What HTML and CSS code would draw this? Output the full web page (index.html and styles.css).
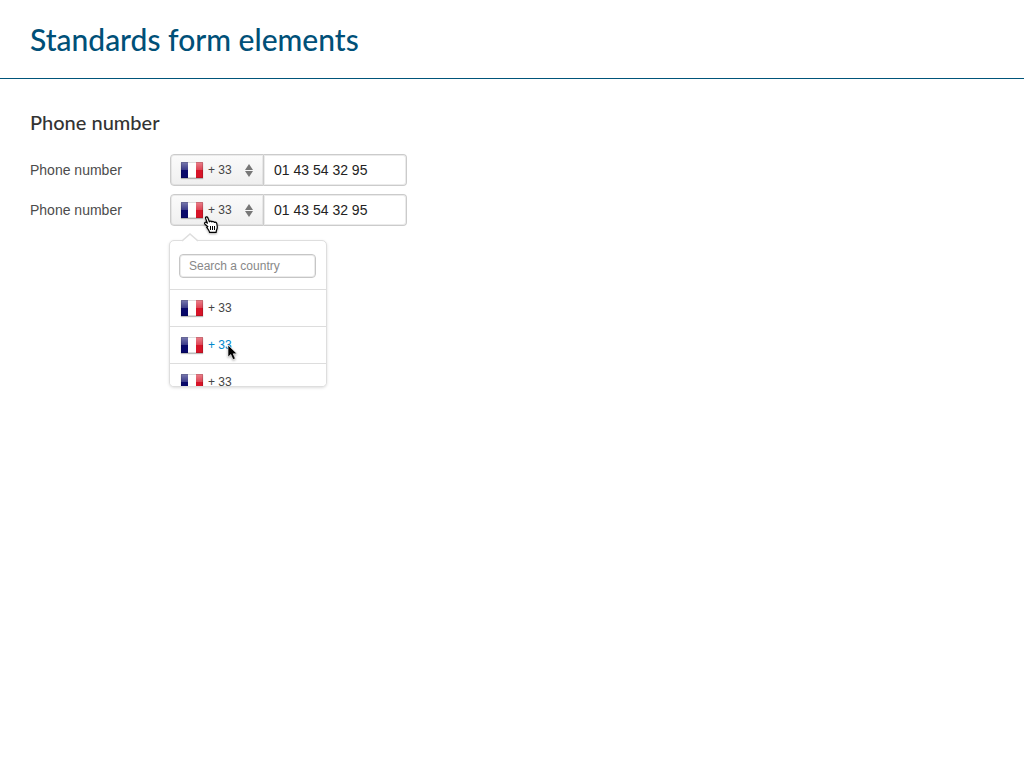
FILE: index.html
```html
<!DOCTYPE html>
<html lang="en">
<head>
<meta charset="utf-8">
<title>Standards form elements</title>
<link rel="stylesheet" href="styles.css">
</head>
<body>
<header class="page-header"><h1 class="page-title">Standards form elements</h1></header>
<main class="content">
  <h2 class="section-title">Phone number</h2>
  <form class="form">
    <div class="row">
      <label class="label" for="phone1">Phone number</label>
      <div class="phone">
        <button type="button" class="prefix"><span class="flag"></span><span class="code">+ 33</span>
          <svg class="arrows" width="8" height="13" viewBox="0 0 8 13"><path d="M4 0L8 6H0zM0 7H8L4 13z"/></svg>
        </button>
        <input class="number" id="phone1" type="text" value="01 43 54 32 95">
      </div>
    </div>
    <div class="row">
      <label class="label" for="phone2">Phone number</label>
      <div class="phone">
        <button type="button" class="prefix"><span class="flag"></span><span class="code">+ 33</span>
          <svg class="arrows" width="8" height="13" viewBox="0 0 8 13"><path d="M4 0L8 6H0zM0 7H8L4 13z"/></svg>
        </button>
        <input class="number" id="phone2" type="text" value="01 43 54 32 95">
        <svg class="cursor hand" width="16" height="18" viewBox="0 0 16 18"><path d="M5.2 11L2 8.2C.8 7 2.3 5.6 3.6 6.6L4.4 7.2 2.6 2.4C2.2 .8 4.2 .2 4.8 1.8L6.4 5.8C7 4.8 8.5 4.9 8.9 6 9.6 5.1 11 5.4 11.3 6.5 12.4 5.8 13.6 6.5 13.8 7.6L14.3 11C14.3 13 13.3 13.8 13.1 16.4H6.6C6.4 14.4 5 13 3.4 10.8" fill="#fff" stroke="#000" stroke-width="1.2" stroke-linejoin="round"/><path d="M7.5 10V14M9.5 10V14M11.5 10V14" stroke="#000" fill="none"/></svg>
        <div class="menu">
          <svg class="tip" width="16" height="9" viewBox="0 0 16 9"><path d="M0 8.5L8 1 16 8.5V9H0z" fill="#fff"/><path d="M0 8L8 1 16 8" fill="none" stroke="#dedede" stroke-width="1.5"/></svg>
          <div class="menu-body">
            <div class="search"><input class="search-input" type="text" placeholder="Search a country" aria-label="Search a country"></div>
            <button type="button" class="option"><span class="flag"></span><span class="code">+ 33</span></button>
            <button type="button" class="option active"><span class="flag"></span><span class="code">+ 33</span>
              <svg class="cursor pointer" width="11" height="17" viewBox="0 0 11 17"><path d="M1 1V13L3.8 10.5 6 15.6 8.3 14.6 6.2 9.8H10z" fill="#000" stroke="#fff" stroke-width=".6"/></svg>
            </button>
            <button type="button" class="option"><span class="flag"></span><span class="code">+ 33</span></button>
          </div>
        </div>
      </div>
    </div>
  </form>
</main>
</body>
</html>
```

FILE: styles.css
```css
* { box-sizing: border-box; }
body { min-height: 100vh; margin: 0; background: #fff; color: #333; font-family: "Liberation Sans", Arial, sans-serif; font-size: 14px; }
.page-header { padding: 19px 30px; border-bottom: 1px solid #00557a; }
.page-title { margin: 0; font: 500 30px/40px Lato, sans-serif; color: #005078; }
.content { padding: 31px 30px; }
.section-title { margin: 0 0 20px; font: 500 20px/24px Lato, sans-serif; color: #333; }
.form { display: grid; gap: 8px; }
.row { display: flex; align-items: center; }
.label { width: 140px; color: #4c4c4c; }
.phone { position: relative; display: flex; width: 237px; height: 32px; }
button, input { margin: 0; font-family: inherit; }
.prefix { display: flex; align-items: center; width: 94px; padding: 0 10px; border: 1px solid #cbcbcb; border-radius: 4px 0 0 4px; background: linear-gradient(#fbfbfb, #efefef); box-shadow: inset 0 0 0 1px #00000010; }
.flag { flex: none; width: 22px; height: 16px; border: 1px solid #0002; background: linear-gradient(#fff7, #fff3 50%, #fff0 50%) border-box, linear-gradient(90deg, #08086a 0 7px, #fff 7px 15px, #d71428 15px) border-box; box-shadow: 0 1px 1px #0004; }
.code { margin-left: 5px; font-size: 12px; color: #444; }
.arrows { margin-left: auto; fill: #777; }
.number { flex: 1; min-width: 0; padding: 0 10px; border: 1px solid #cbcbcb; border-left: 0; border-radius: 0 4px 4px 0; background: #fff; color: #222; font-size: 14px; box-shadow: inset 0 0 0 1px #00000014; }
.menu { position: absolute; top: 46px; left: -1px; width: 158px; }
.menu-body { height: 147px; overflow: hidden; border: 1px solid #dedede; border-radius: 5px; background: #fff; box-shadow: 0 1px 3px #0002; }
.tip { position: absolute; top: -7px; left: 13px; }
.search { padding: 13px 10px 11px 9px; }
.search-input { display: block; width: 100%; height: 24px; padding: 0 9px; border: 1px solid #c6c6c6; border-radius: 4px; font-size: 12px; box-shadow: inset 0 0 0 1px #00000014; }
.search-input::placeholder { color: #888; opacity: 1; }
.option { position: relative; display: flex; align-items: center; width: 100%; height: 37px; padding: 0 11px; border: 0; border-top: 1px solid #ddd; background: #fff; }
.active .code { color: #0088cc; }
.cursor { position: absolute; z-index: 1; filter: drop-shadow(0 1px 1px #0005); }
.hand { left: 33px; top: 22px; }
.pointer { left: 57px; top: 17px; }
```
